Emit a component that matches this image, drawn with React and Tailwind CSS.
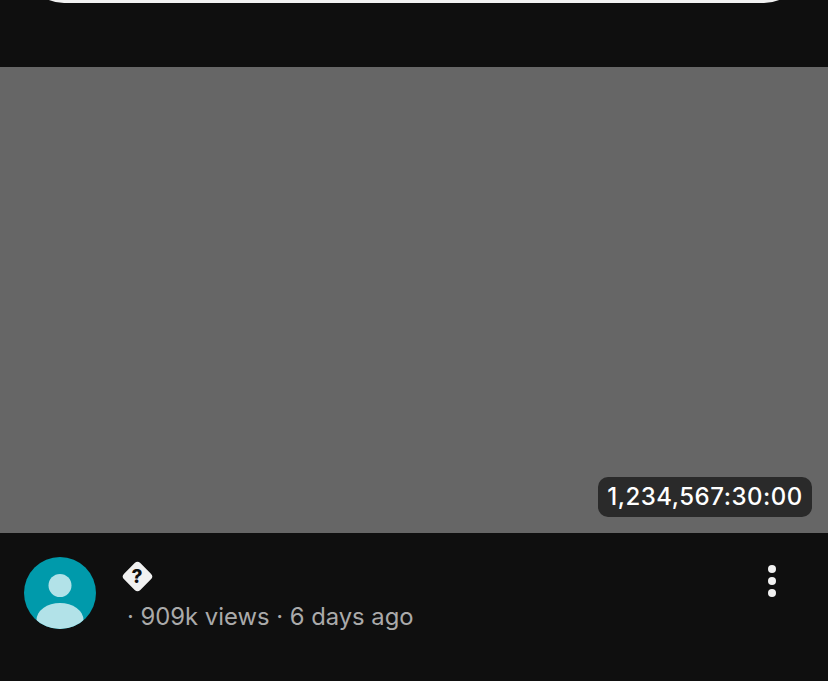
export default function App() {
  return (
    <div className="h-[681px] w-[828px] overflow-hidden bg-[#0f0f0f] font-['Inter',sans-serif]">
      {/* bottom edge of the card above */}
      <div className="flex h-[67px] items-start px-6">
        <div className="flex h-[3px] w-full items-end overflow-hidden">
          <div className="h-[80px] w-full shrink-0 rounded-b-[40px] bg-[#f1f1f1]" />
        </div>
      </div>

      {/* thumbnail */}
      <div className="relative h-[466px] bg-[#666666]">
        <span className="absolute bottom-4 right-4 flex h-10 w-[214px] items-center justify-center rounded-[10px] bg-[#2a2a2a] text-[24px] font-medium tracking-[0.5px] text-white">
          1,234,567:30:00
        </span>
      </div>

      {/* video meta */}
      <div className="flex items-start pl-6 pr-[52px] pt-6">
        <svg className="h-[72px] w-[72px] shrink-0" viewBox="0 0 72 72">
          <defs>
            <clipPath id="avatar">
              <circle cx="36" cy="36" r="36" />
            </clipPath>
          </defs>
          <circle cx="36" cy="36" r="36" fill="#009aab" />
          <g clipPath="url(#avatar)" fill="#b2e2e8">
            <circle cx="36" cy="28.5" r="11.5" />
            <ellipse cx="36" cy="63" rx="23.5" ry="17" />
          </g>
        </svg>

        <div className="ml-[27px] mt-1 flex min-w-0 flex-1 flex-col">
          <div className="relative ml-[-1px] flex h-[30px] w-[30px] items-center justify-center">
            <div className="h-[23px] w-[23px] rotate-45 rounded-[4px] bg-[#f1f1f1]" />
            <span className="absolute text-[19px] font-extrabold leading-none text-[#0f0f0f]">?</span>
          </div>
          <p className="ml-[4px] mt-[11px] text-[23.8px] leading-[30px] text-[#aaaaaa]">· 909k views · 6 days ago</p>
        </div>

        <div className="mt-2 flex w-2 flex-col gap-1">
          <span className="h-2 w-2 rounded-full bg-[#f1f1f1]" />
          <span className="h-2 w-2 rounded-full bg-[#f1f1f1]" />
          <span className="h-2 w-2 rounded-full bg-[#f1f1f1]" />
        </div>
      </div>
    </div>
  );
}
